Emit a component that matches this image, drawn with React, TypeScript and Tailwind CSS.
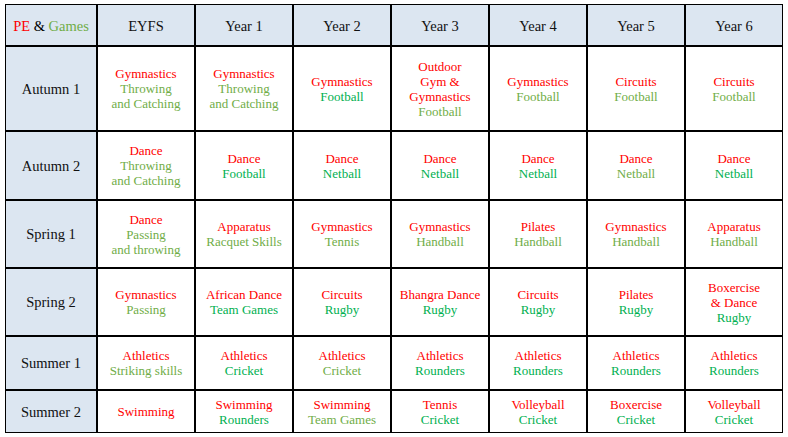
import React from "react";

type Line = [string, "r" | "L" | "B"];
const R = "r", L = "L", B = "B";

const cls: Record<string, string> = {
  r: "text-[#ff0000]",
  L: "text-[#70ad47]",
  B: "text-[#00b050]",
};

const headers = ["EYFS", "Year 1", "Year 2", "Year 3", "Year 4", "Year 5", "Year 6"];

const rows: { name: string; cells: Line[][] }[] = [
  {
    name: "Autumn 1",
    cells: [
      [["Gymnastics", R], ["Throwing", L], ["and Catching", L]],
      [["Gymnastics", R], ["Throwing", L], ["and Catching", L]],
      [["Gymnastics", R], ["Football", B]],
      [["Outdoor", R], ["Gym &", R], ["Gymnastics", R], ["Football", L]],
      [["Gymnastics", R], ["Football", L]],
      [["Circuits", R], ["Football", L]],
      [["Circuits", R], ["Football", L]],
    ],
  },
  {
    name: "Autumn 2",
    cells: [
      [["Dance", R], ["Throwing", L], ["and Catching", L]],
      [["Dance", R], ["Football", B]],
      [["Dance", R], ["Netball", B]],
      [["Dance", R], ["Netball", B]],
      [["Dance", R], ["Netball", B]],
      [["Dance", R], ["Netball", L]],
      [["Dance", R], ["Netball", B]],
    ],
  },
  {
    name: "Spring 1",
    cells: [
      [["Dance", R], ["Passing", L], ["and throwing", L]],
      [["Apparatus", R], ["Racquet Skills", L]],
      [["Gymnastics", R], ["Tennis", L]],
      [["Gymnastics", R], ["Handball", L]],
      [["Pilates", R], ["Handball", L]],
      [["Gymnastics", R], ["Handball", L]],
      [["Apparatus", R], ["Handball", L]],
    ],
  },
  {
    name: "Spring 2",
    cells: [
      [["Gymnastics", R], ["Passing", L]],
      [["African Dance", R], ["Team Games", B]],
      [["Circuits", R], ["Rugby", B]],
      [["Bhangra Dance", R], ["Rugby", B]],
      [["Circuits", R], ["Rugby", B]],
      [["Pilates", R], ["Rugby", B]],
      [["Boxercise", R], ["& Dance", R], ["Rugby", B]],
    ],
  },
  {
    name: "Summer 1",
    cells: [
      [["Athletics", R], ["Striking skills", L]],
      [["Athletics", R], ["Cricket", B]],
      [["Athletics", R], ["Cricket", L]],
      [["Athletics", R], ["Rounders", B]],
      [["Athletics", R], ["Rounders", B]],
      [["Athletics", R], ["Rounders", B]],
      [["Athletics", R], ["Rounders", B]],
    ],
  },
  {
    name: "Summer 2",
    cells: [
      [["Swimming", R]],
      [["Swimming", R], ["Rounders", B]],
      [["Swimming", R], ["Team Games", L]],
      [["Tennis", R], ["Cricket", B]],
      [["Volleyball", R], ["Cricket", B]],
      [["Boxercise", R], ["Cricket", B]],
      [["Volleyball", R], ["Cricket", B]],
    ],
  },
];

export default function App() {
  return (
    <div className="w-[788px] h-[437px] bg-white pt-[4px] pl-[5px]" style={{ fontFamily: '"Liberation Serif", serif' }}>
      <div className="inline-grid grid-cols-[90px_repeat(7,96px)] grid-rows-[40px_83px_67px_66px_66px_52px_41px] gap-[2px] bg-black border border-black">
        <div className="bg-[#dce6f1] flex items-center justify-center pt-[3px] text-[14.5px]">
          <span className="text-[#ff0000]">PE</span>
          <span className="text-black">&nbsp;&amp;&nbsp;</span>
          <span className="text-[#70ad47]">Games</span>
        </div>
        {headers.map((h) => (
          <div key={h} className="bg-[#dce6f1] flex items-center justify-center pt-[3px] text-[14.5px] text-[#111]">
            {h}
          </div>
        ))}
        {rows.map((row) => (
          <React.Fragment key={row.name}>
            <div className="bg-[#dce6f1] flex items-center justify-center pt-[2px] text-[14.5px] text-[#111]">
              {row.name}
            </div>
            {row.cells.map((c, i) => (
              <div key={i} className="bg-white flex flex-col items-center justify-center text-[13px] leading-[15px] text-center">
                {c.map(([t, col], j) => (
                  <span key={j} className={cls[col]}>
                    {t}
                  </span>
                ))}
              </div>
            ))}
          </React.Fragment>
        ))}
      </div>
    </div>
  );
}
